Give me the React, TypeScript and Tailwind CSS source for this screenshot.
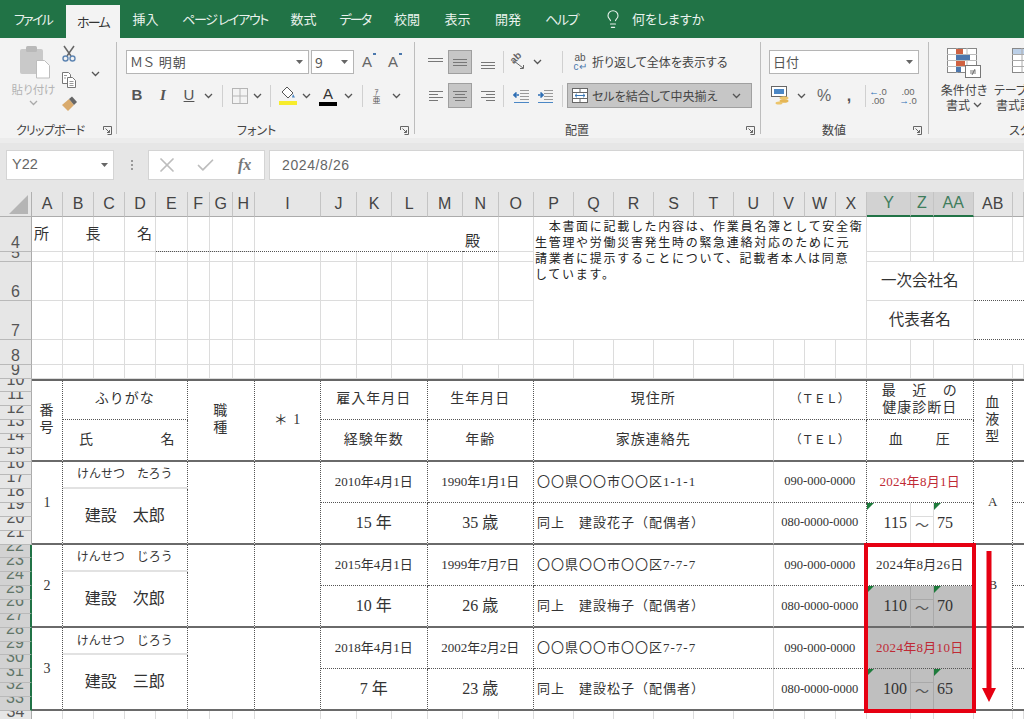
import { Check, Lightbulb, X } from "lucide-react";

const columns = ["A", "B", "C", "D", "E", "F", "G", "H", "I", "J", "K", "L", "M", "N", "O", "P", "Q", "R", "S", "T", "U", "V", "W", "X", "Y", "Z", "AA", "AB", "AC"];
const rows = [4, 5, 6, 7, 8, 9, 10, 11, 12, 13, 14, 15, 16, 17, 18, 19, 20, 21, 22, 23, 24, 25, 26, 27, 28, 29, 30, 31, 32, 33, 34];
const tabs = [
  { label: "ファイル", style: "w-[66px] tracking-[-1.7px]" },
  { label: "ホーム", style: "w-[54px] tracking-[-1.7px]", active: true },
  { label: "挿入", style: "w-[51px]" },
  { label: "ページ レイアウト", style: "w-[108px] tracking-[-1.4px]" },
  { label: "数式", style: "w-[49px]" },
  { label: "データ", style: "w-[54px] tracking-[-1.7px]" },
  { label: "校閲", style: "w-[50px]" },
  { label: "表示", style: "w-[51px]" },
  { label: "開発", style: "w-[50px]" },
  { label: "ヘルプ", style: "w-[57px] tracking-[-1.5px]" },
];

const dr = "[border-right:1px_dotted_#555]";
const db = "[border-bottom:1px_dotted_#555]";
const sb = "[border-bottom:2px_solid_#6a6a6a]";
const center = "flex items-center justify-center bg-white";

const Chev = ({ color = "#555" }: { color?: string }) => (
  <svg width="9" height="6" viewBox="0 0 9 6" fill="none" stroke={color} strokeWidth="1.3">
    <path d="M1 1l3.5 3.5L8 1" />
  </svg>
);

const Sep = () => <div className="h-[22px] w-px shrink-0 self-center bg-[#d0d0d0]" />;
const GroupSep = () => <div className="mt-[4px] h-[92px] w-px shrink-0 bg-[#bdbdbd]" />;

const Launcher = ({ className }: { className: string }) => (
  <svg className={className} width="9" height="9" viewBox="0 0 9 9" fill="none" stroke="#666" strokeWidth="1">
    <path d="M.5 4V.5H8.500V8.500H4.500" />
    <path d="M2.500 2.500l4 4M6.500 4v2.500H4" />
  </svg>
);

const TriDown = () => (
  <svg width="7" height="4" viewBox="0 0 7 4" fill="#666">
    <path d="M0 0h7L3.500 4z" />
  </svg>
);

// stroked text lines for the alignment buttons
const LinesIcon = ({ lines }: { lines: number[][] }) => (
  <svg width="16" height="16" viewBox="0 0 16 16" stroke="#777" strokeWidth="1">
    {lines.map(([x1, x2, y]) => (
      <path key={`${x1}${y}`} d={`M${x1} ${y}.5H${x2}`} />
    ))}
  </svg>
);

const PasteIcon = () => (
  <svg width="32" height="34" viewBox="0 0 32 34">
    <rect x="1" y="4" width="23" height="25" rx="2" fill="#c9c9c9" />
    <rect x="7" y="1" width="11" height="6" rx="1.500" fill="#b9b9b9" />
    <path d="M17.500 15.500h8l5 5v12.500h-13z" fill="#fff" stroke="#bdbdbd" />
  </svg>
);

const ScissorsIcon = () => (
  <svg width="16" height="17" viewBox="0 0 16 17" fill="none">
    <path d="M3 1l7 10M13 1L6 11" stroke="#666" strokeWidth="1.500" />
    <circle cx="4.500" cy="13.500" r="2.500" stroke="#5f86b3" strokeWidth="1.400" />
    <circle cx="11.500" cy="13.500" r="2.500" stroke="#5f86b3" strokeWidth="1.400" />
  </svg>
);

const CopyIcon = () => (
  <svg width="16" height="17" viewBox="0 0 16 17" fill="#fff" stroke="#777">
    <path d="M1.500 1.500h6l2 2v9h-8z" />
    <path d="M6.500 6.500h5l3 3v7h-8z" />
    <path d="M3 4.500h3M3 7h2M8.500 10.500h4M8.500 12.500h4M8.500 14.500h4" stroke="#999" />
  </svg>
);

const BrushIcon = () => (
  <svg width="17" height="15" viewBox="0 0 17 15">
    <path d="M1 9l7-6 5 6-6 6z" fill="#d9aa6c" />
    <path d="M8 3l3-2.500 5 5.500-3 3z" fill="#666" />
  </svg>
);

const BorderIcon = () => (
  <svg width="16" height="16" viewBox="0 0 16 16" fill="none" stroke="#b5b5b5">
    <rect x=".5" y=".5" width="15" height="15" />
    <path d="M8 1v14M1 8h14" />
  </svg>
);

const FillIcon = () => (
  <div className="flex w-[18px] flex-col items-center">
    <svg width="16" height="14" viewBox="0 0 16 14" fill="#fff" stroke="#555">
      <path d="M7 1l6 6-5 5-6-6z" />
      <path d="M13 8l2 3.500h-3z" fill="#4b87c5" stroke="none" />
    </svg>
    <div className="mt-[1px] h-[4px] w-[18px] bg-[#f7ec2c]" />
  </div>
);

// slanted "ab" over an arrow
const OrientIcon = () => (
  <div className="relative h-[18px] w-[20px]">
    <span className="absolute top-[-1px] left-[1px] -rotate-45 [font-family:'Liberation_Sans',sans-serif] text-[10px] leading-[12px] font-bold text-[#666]">ab</span>
    <svg className="absolute top-0 left-0" width="20" height="18" viewBox="0 0 20 18" fill="none" stroke="#666">
      <path d="M5 8l9 7M11 15.500h3.500V12" />
    </svg>
  </div>
);

const IndentIcon = ({ flip }: { flip?: boolean }) => (
  <svg width="16" height="14" viewBox="0 0 16 14" fill="none">
    <path d="M7 1.500h9M7 4.500h9M7 7.500h9M7 10.500h9" stroke="#999" />
    <path d="M1 13.500h15" stroke="#4b87c5" />
    <path d={flip ? "M1 6h4M3.500 3.500L6 6 3.500 8.500" : "M6 6H1M3.500 3.500L1 6l2.500 2.500"} stroke="#2f6fb5" strokeWidth="1.700" />
  </svg>
);

const MergeIcon = () => (
  <svg width="16" height="15" viewBox="0 0 16 15" fill="#fff" stroke="#666">
    <rect x=".5" y=".5" width="15" height="14" />
    <path d="M1 4.500h14M1 10.500h14M8 1v3M8 11v3" />
    <path d="M3 7.500h10M5 5.700L3 7.500l2 1.800M11 5.700l2 1.800-2 1.800" stroke="#3b79b7" fill="none" />
  </svg>
);

const MoneyIcon = () => (
  <svg width="20" height="19" viewBox="0 0 20 19">
    <rect x=".5" y=".5" width="15" height="10" fill="#fff" stroke="#666" />
    <rect x="3" y="3" width="10" height="5" fill="#4b87c5" />
    <ellipse cx="13" cy="12" rx="4.500" ry="1.800" fill="#ecc56c" />
    <ellipse cx="13" cy="15" rx="4.500" ry="1.800" fill="#e5b655" />
    <ellipse cx="8" cy="17" rx="3.500" ry="1.600" fill="#ecc56c" />
  </svg>
);

const CondIcon = () => (
  <svg width="34" height="30" viewBox="0 0 34 30">
    <rect x=".5" y=".5" width="29" height="24" fill="#fff" stroke="#888" />
    <path d="M10 0v25M20 0v25M0 6.500h30M0 12.500h30M0 18.500h30" stroke="#bbb" />
    <rect x="9" y="1" width="7" height="5" fill="#cf6242" />
    <rect x="9" y="7" width="14" height="5" fill="#4d77ad" />
    <rect x="9" y="13" width="9" height="5" fill="#cf6242" />
    <rect x="9" y="19" width="5" height="5" fill="#4d77ad" />
    <rect x="18.500" y="17.500" width="15" height="12" fill="#fff" stroke="#777" />
    <path d="M23 23h6M23 25h6M25 27l3-6" stroke="#555" strokeWidth=".8" />
  </svg>
);

const TableIcon = () => (
  <svg width="34" height="30" viewBox="0 0 34 30">
    <rect x=".5" y=".5" width="30" height="24" fill="#fff" stroke="#888" />
    <rect x="1" y="1" width="29" height="5" fill="#bcd0e8" />
    <path d="M10 0v25M20 0v25M0 6.500h30M0 12.500h30M0 18.500h30" stroke="#aaa" />
    <path d="M14 28l10-12 5 4-10 10z" fill="#5f8fc7" />
  </svg>
);

const Ribbon = () => (
  <div className="flex h-[100px] shrink-0 overflow-hidden bg-[#f3f3f3] text-[12px] text-[#444]">
    {/* clipboard */}
    <div className="flex w-[116px] shrink-0 flex-col">
      <div className="flex h-[75px] pt-[7px]">
        <div className="flex w-[60px] flex-col items-center pl-[7px] text-[#b3b3b3]">
          <div className="pl-[3px]"><PasteIcon /></div>
          <span className="mt-[3px] text-[11.5px] leading-[15px] whitespace-nowrap">貼り付け</span>
          <div className="mt-[3px]"><Chev color="#aaa" /></div>
        </div>
        <div className="flex h-[66px] w-[18px] flex-col items-center justify-between">
          <ScissorsIcon />
          <CopyIcon />
          <BrushIcon />
        </div>
        <div className="mt-[26px] ml-[13px]"><Chev /></div>
      </div>
      <div className="mt-[9px] flex h-[16px] items-center pl-[16px]">
        <span className="tracking-[-0.8px]">クリップボード</span>
        <Launcher className="mr-[4px] ml-auto" />
      </div>
    </div>
    <GroupSep />
    {/* font */}
    <div className="flex w-[297px] shrink-0 flex-col pt-[12px]">
      <div className="flex h-[24px] items-center">
        <div className="ml-[9px] flex h-[24px] w-[183px] items-center border border-[#b5b5b5] bg-white pr-[5px] pl-[3px] text-[13px] tracking-[1px] text-[#555]">
          ＭＳ 明朝<span className="ml-auto"><TriDown /></span>
        </div>
        <div className="ml-[2px] flex h-[24px] w-[43px] items-center border border-[#b5b5b5] bg-white pr-[5px] pl-[3px] text-[14px] text-[#555]">
          9<span className="ml-auto"><TriDown /></span>
        </div>
        <div className="relative ml-[4px] w-[18px] text-center [font-family:'Liberation_Sans',sans-serif] text-[15px] text-[#666]">
          A<div className="absolute top-[2px] right-0 h-[2px] w-[3px] bg-[#4b78ad]" />
        </div>
        <div className="relative ml-[8px] w-[18px] text-center [font-family:'Liberation_Sans',sans-serif] text-[15px] text-[#666]">
          A<div className="absolute top-[2px] right-0 h-[2px] w-[3px] bg-[#4b78ad]" />
        </div>
      </div>
      <div className="mt-[9px] flex h-[25px] items-center [font-family:'Liberation_Sans',sans-serif] text-[15px] text-[#555]">
        <div className="ml-[7px] w-[26px] text-center font-bold">B</div>
        <div className="w-[26px] text-center [font-family:'Liberation_Serif',serif] font-bold italic">I</div>
        <div className="w-[26px] text-center underline">U</div>
        <div className="flex w-[12px] justify-center"><Chev /></div>
        <div className="w-[8px]" />
        <Sep />
        <div className="flex w-[28px] justify-center pl-[6px]"><BorderIcon /></div>
        <div className="flex w-[12px] justify-center"><Chev /></div>
        <div className="w-[7px]" />
        <Sep />
        <div className="flex w-[29px] justify-center pl-[5px]"><FillIcon /></div>
        <div className="flex w-[12px] justify-center"><Chev /></div>
        <div className="flex w-[28px] flex-col items-center pl-[4px] text-[15px] leading-[15px] text-[#333]">
          A<div className="mt-[1px] h-[4px] w-[18px] bg-black" />
        </div>
        <div className="flex w-[16px] justify-center"><Chev /></div>
        <div className="w-[6px]" />
        <Sep />
        <div className="flex w-[27px] flex-col items-center [font-family:'Noto_Sans_CJK_JP',sans-serif] text-[8px] leading-[8px]">
          <span>ｱ</span>
          <span>亜</span>
        </div>
        <div className="flex w-[12px] justify-center"><Chev /></div>
      </div>
      <div className="mt-[14px] flex h-[16px] items-center pl-[120px]">
        <span>フォント</span>
        <Launcher className="mr-[5px] ml-auto" />
      </div>
    </div>
    <GroupSep />
    {/* alignment */}
    <div className="flex w-[345px] shrink-0 flex-col pt-[12px]">
      <div className="flex h-[24px] items-center">
        <div className="ml-[9px] flex w-[24px] justify-center"><LinesIcon lines={[[0, 15, 4], [0, 15, 7]]} /></div>
        <div className="flex h-[24px] w-[24px] items-center justify-center border border-[#9f9f9f] bg-[#c6c6c6]"><LinesIcon lines={[[1, 15, 5], [1, 15, 8], [1, 15, 11]]} /></div>
        <div className="flex w-[31px] justify-center"><LinesIcon lines={[[1, 15, 8], [1, 15, 11], [1, 15, 14]]} /></div>
        <Sep />
        <div className="flex w-[26px] justify-center pl-[4px]"><OrientIcon /></div>
        <div className="flex w-[14px] justify-center"><Chev /></div>
        <div className="w-[18px]" />
        <Sep />
        <div className="ml-[9px] flex w-[16px] flex-col items-center [font-family:'Liberation_Sans',sans-serif] text-[10px] leading-[9px] text-[#555]">
          <span>ab</span>
          <span className="text-[#4b78ad]">c↵</span>
        </div>
        <span className="ml-[4px] whitespace-nowrap">折り返して全体を表示する</span>
      </div>
      <div className="mt-[9px] flex h-[25px] items-center">
        <div className="ml-[9px] flex w-[24px] justify-center"><LinesIcon lines={[[1, 15, 3], [1, 10, 6], [1, 15, 9], [1, 10, 12]]} /></div>
        <div className="flex h-[25px] w-[24px] items-center justify-center border border-[#9f9f9f] bg-[#c6c6c6]"><LinesIcon lines={[[1, 15, 3], [3, 13, 6], [1, 15, 9], [3, 13, 12]]} /></div>
        <div className="flex w-[31px] justify-center"><LinesIcon lines={[[1, 15, 3], [6, 15, 6], [1, 15, 9], [6, 15, 12]]} /></div>
        <Sep />
        <div className="flex w-[30px] justify-center pl-[4px]"><IndentIcon /></div>
        <div className="flex w-[22px] justify-center"><IndentIcon flip /></div>
        <div className="w-[6px]" />
        <Sep />
        <div className="ml-[4px] flex h-[25px] w-[185px] items-center border border-[#a0a0a0] bg-[#c6c6c6] pl-[4px]">
          <MergeIcon />
          <span className="ml-[4px] whitespace-nowrap">セルを結合して中央揃え</span>
          <span className="mr-[10px] ml-auto"><Chev /></span>
        </div>
      </div>
      <div className="mt-[14px] flex h-[16px] items-center pl-[150px]">
        <span>配置</span>
        <Launcher className="mr-[5px] ml-auto" />
      </div>
    </div>
    <GroupSep />
    {/* number */}
    <div className="flex w-[167px] shrink-0 flex-col pt-[12px]">
      <div className="ml-[8px] flex h-[24px] w-[150px] items-center border border-[#b5b5b5] bg-white pr-[5px] pl-[3px] text-[13px] text-[#555]">
        日付<span className="ml-auto"><TriDown /></span>
      </div>
      <div className="mt-[9px] flex h-[25px] items-center">
        <div className="ml-[10px] w-[20px]"><MoneyIcon /></div>
        <div className="flex w-[20px] justify-center"><Chev /></div>
        <div className="w-[26px] text-center [font-family:'Liberation_Sans',sans-serif] text-[16px] text-[#666]">%</div>
        <div className="w-[24px] text-center [font-family:'Liberation_Sans',sans-serif] text-[16px] font-bold text-[#555]">,</div>
        <div className="w-[4px]" />
        <Sep />
        <div className="flex w-[24px] flex-col items-center [font-family:'Liberation_Sans',sans-serif] text-[9.5px] leading-[9px] text-[#666]">
          <span><span className="text-[#2f6fb5]">←</span>.0</span>
          <span>.00</span>
        </div>
        <div className="flex w-[36px] flex-col items-center [font-family:'Liberation_Sans',sans-serif] text-[9.5px] leading-[9px] text-[#666]">
          <span>.00</span>
          <span><span className="text-[#2f6fb5]">→</span>.0</span>
        </div>
      </div>
      <div className="mt-[14px] flex h-[16px] items-center pl-[61px]">
        <span>数値</span>
        <Launcher className="mr-[6px] ml-auto" />
      </div>
    </div>
    <GroupSep />
    {/* styles */}
    <div className="flex w-[120px] shrink-0 flex-col pt-[10px]">
      <div className="flex h-[74px] pl-[5px]">
        <div className="flex w-[60px] shrink-0 flex-col items-center">
          <CondIcon />
          <span className="mt-[4px] leading-[15px] whitespace-nowrap">条件付き</span>
          <span className="flex items-center gap-[3px] leading-[15px]">書式<Chev /></span>
        </div>
        <div className="flex w-[60px] shrink-0 flex-col">
          <div className="ml-[18px]"><TableIcon /></div>
          <span className="mt-[4px] leading-[15px] whitespace-nowrap">テーブルとして</span>
          <span className="ml-[2px] leading-[15px] whitespace-nowrap">書式設定</span>
        </div>
      </div>
      <div className="mt-[4px] flex h-[16px] items-center pl-[80px]">
        <span className="whitespace-nowrap">スタイル</span>
      </div>
    </div>
  </div>
);

const FormulaBar = () => (
  <div className="flex h-[54px] shrink-0 items-start border-t-[5px] border-t-[#ececec] bg-[#e6e6e6] pt-[7px] text-[#666]">
    <div className="ml-[6px] flex h-[30px] w-[108px] items-center border border-[#d4d4d4] bg-white pr-[5px] pl-[5px] [font-family:'Liberation_Sans',sans-serif] text-[14.5px]">
      Y22<span className="ml-auto"><TriDown /></span>
    </div>
    <div className="ml-[15px] flex h-[30px] w-[5px] flex-col items-center justify-center gap-[2px]">
      <div className="h-[2px] w-[2px] bg-[#999]" />
      <div className="h-[2px] w-[2px] bg-[#999]" />
      <div className="h-[2px] w-[2px] bg-[#999]" />
    </div>
    <div className="ml-[14px] flex h-[30px] w-[117px] items-center border border-[#d4d4d4] bg-white">
      <X className="ml-[6px]" size={24} color="#bdbdbd" strokeWidth={1.7} />
      <Check className="ml-[16px]" size={21} color="#bdbdbd" strokeWidth={2} />
      <span className="ml-[22px] [font-family:'Liberation_Serif',serif] text-[16px] font-bold text-[#777] italic">fx</span>
    </div>
    <div className="ml-[4px] flex h-[30px] grow items-center border border-[#d4d4d4] bg-white pl-[12px] [font-family:'Liberation_Sans',sans-serif] text-[14px] tracking-[0.6px]">
      2024/8/26
    </div>
  </div>
);

const TableHead = () => (
  <div className="col-[2/31] row-[8/14] grid grid-cols-subgrid grid-rows-subgrid text-[14px] tracking-[1px] text-[#333]">
    <div className={`col-[1] row-[1/7] flex-col leading-[17px] ${center} ${dr} ${sb}`}>
      <span>番</span>
      <span>号</span>
    </div>
    <div className={`col-[2/6] row-[1/4] ${center} ${dr} ${db}`}>ふりがな</div>
    <div className={`col-[2/6] row-[4/7] justify-between! pr-[11px] pl-[16px] ${center} ${dr} ${sb}`}>
      <span>氏</span>
      <span>名</span>
    </div>
    <div className={`col-[6/9] row-[1/7] flex-col leading-[17px] ${center} ${dr} ${sb}`}>
      <span>職</span>
      <span>種</span>
    </div>
    <div className={`col-[9] row-[1/7] ${center} ${dr} ${sb}`}>＊ 1</div>
    <div className={`col-[10/13] row-[1/4] ${center} ${dr} ${db}`}>雇入年月日</div>
    <div className={`col-[10/13] row-[4/7] ${center} ${dr} ${sb}`}>経験年数</div>
    <div className={`col-[13/16] row-[1/4] ${center} ${dr} ${db}`}>生年月日</div>
    <div className={`col-[13/16] row-[4/7] ${center} ${dr} ${sb}`}>年齢</div>
    <div className={`col-[16/22] row-[1/4] ${center} [border-right:1px_solid_#d4d4d4] ${db}`}>現住所</div>
    <div className={`col-[16/22] row-[4/7] ${center} [border-right:1px_solid_#d4d4d4] ${sb}`}>家族連絡先</div>
    <div className={`col-[22/25] row-[1/4] text-[12px] tracking-[0px] ${center} ${dr} ${db}`}>（ＴＥＬ）</div>
    <div className={`col-[22/25] row-[4/7] text-[12px] tracking-[0px] ${center} ${dr} ${sb}`}>（ＴＥＬ）</div>
    <div className={`col-[25/28] row-[1/4] flex-col leading-[17px] ${center} ${dr} ${db}`}>
      <div className="flex w-[76px] justify-between"><span>最</span><span>近</span><span>の</span></div>
      <span>健康診断日</span>
    </div>
    <div className={`col-[25/28] row-[4/7] ${center} ${dr} ${sb}`}>
      <div className="flex w-[62px] justify-between"><span>血</span><span>圧</span></div>
    </div>
    <div className={`col-[28] row-[1/7] flex-col leading-[17px] ${center} ${dr} ${sb}`}>
      <span>血</span>
      <span>液</span>
      <span>型</span>
    </div>
    <div className={`col-[29] row-[1/7] ${center} ${sb}`} />
    <div className="col-[1/30] row-[1] h-[2px] self-start bg-[#666]" />
  </div>
);

type RecordProps = {
  className: string;
  no: string;
  kana: string;
  name: string;
  hired: string;
  years: string;
  birth: string;
  age: string;
  address: string;
  family: string;
  checkup: string;
  checkupRed?: boolean;
  high: string;
  low: string;
  blood?: string;
  topGray?: boolean;
  bottomGray?: boolean;
};

const Flag = () => <div className="absolute top-0 left-0 h-0 w-0 border-t-[7px] border-r-[7px] border-t-[#1e7b3c] border-r-transparent" />;

const StaffRecord = (p: RecordProps) => {
  const fillTop = p.topGray ? "bg-[#bfbfbf]!" : "";
  const fillBottom = p.bottomGray ? "bg-[#bfbfbf]!" : "";
  const lightEdge = p.bottomGray ? "[border-right:1px_solid_#a9a9a9]" : "[border-right:1px_solid_#dcdcdc]";
  const lightLine = p.bottomGray ? "[border-bottom:1px_solid_#a9a9a9]" : "[border-bottom:1px_solid_#dcdcdc]";
  return (
    <div className={`${p.className} grid grid-cols-subgrid grid-rows-subgrid text-[#333]`}>
      <div className={`col-[1] row-[1/7] text-[14px] ${center} ${dr} ${sb}`}>{p.no}</div>
      <div className={`col-[2/6] row-[1/3] text-[12px] ${center} ${dr} [border-bottom:2px_solid_#e2e2e2]`}>{p.kana}</div>
      <div className={`col-[2/6] row-[3/7] text-[16px] ${center} ${dr} ${sb}`}>{p.name}</div>
      <div className={`col-[6/9] row-[1/7] ${center} ${dr} ${sb}`} />
      <div className={`col-[9] row-[1/7] ${center} ${dr} ${sb}`} />
      <div className={`col-[10/13] row-[1/4] text-[13px] ${center} ${dr} ${db}`}>{p.hired}</div>
      <div className={`col-[10/13] row-[4/7] text-[16px] ${center} ${dr} ${sb}`}>{p.years}</div>
      <div className={`col-[13/16] row-[1/4] text-[13px] ${center} ${dr} ${db}`}>{p.birth}</div>
      <div className={`col-[13/16] row-[4/7] text-[16px] ${center} ${dr} ${sb}`}>{p.age}</div>
      <div className={`col-[16/22] row-[1/4] justify-start! pl-[3px] text-[13px] tracking-[1px] ${center} [border-right:1px_solid_#d4d4d4] ${db}`}>{p.address}</div>
      <div className={`col-[16/22] row-[4/7] justify-start! pl-[3px] text-[13px] tracking-[1px] ${center} [border-right:1px_solid_#d4d4d4] ${sb}`}>{p.family}</div>
      <div className={`col-[22/25] row-[1/4] text-[12.5px] ${center} ${dr} ${db}`}>090-000-0000</div>
      <div className={`col-[22/25] row-[4/7] text-[12.5px] ${center} ${dr} ${sb}`}>080-0000-0000</div>
      <div className={`col-[25/28] row-[1/4] text-[13px] tracking-[0.3px] ${center} ${dr} ${db} ${fillTop} ${p.checkupRed ? "text-[#bf2a35]" : ""}`}>{p.checkup}</div>
      <div className={`relative col-[25] row-[4/7] justify-end! pr-[3px] text-[16px] ${center} ${lightEdge} ${sb} ${fillBottom}`}>
        <Flag />
        {p.high}
      </div>
      <div className={`col-[26] row-[4] ${center} ${lightEdge} ${lightLine} ${fillBottom}`} />
      <div className={`col-[26] row-[5/7] pb-[8px] text-[14px] text-[#555] ${center} ${lightEdge} ${sb} ${fillBottom}`}>～</div>
      <div className={`relative col-[27] row-[4/7] justify-start! pl-[3px] text-[16px] ${center} ${dr} ${sb} ${fillBottom}`}>
        <Flag />
        {p.low}
      </div>
      <div className={`col-[28] row-[1/7] text-[13px] ${center} ${dr} ${sb}`}>{p.blood}</div>
      <div className={`col-[29] row-[1/4] ${center} ${db}`} />
      <div className={`col-[29] row-[4/7] ${center} ${sb}`} />
    </div>
  );
};

const Sheet = () => (
  <div className="relative grid h-[527px] grid-cols-[32px_31px_31px_31px_31px_31.5px_22.5px_22.5px_22.5px_66px_36px_35px_35.5px_35.5px_35.5px_35.5px_40px_40px_40px_40px_40px_39.5px_31px_31px_31.5px_44px_23px_39.5px_39.5px_11px] grid-rows-[25px_35px_10px_39px_39px_25px_13.5px_repeat(25,13.85px)] overflow-hidden bg-white [font-family:'Liberation_Serif','Noto_Sans_CJK_JP',serif] [font-feature-settings:normal]">
    {/* headers */}
    <div className="col-[1] row-[1] flex items-end justify-end border-r border-b border-[#b0b0b0] bg-[#e6e6e6] pr-[3px] pb-[2px]">
      <svg width="19" height="19" viewBox="0 0 19 19" fill="#b5b5b5">
        <path d="M19 0v19H0z" />
      </svg>
    </div>
    {columns.map((c, i) => {
      const picked = c === "Y" || c === "Z" || c === "AA";
      return (
        <div
          key={c}
          style={{ gridColumn: i + 2, gridRow: 1 }}
          className={`flex items-center justify-center overflow-hidden border-r border-[#c4c4c4] pb-[1px] [font-family:'Liberation_Sans',sans-serif] text-[16px] ${picked ? "border-b-2 border-b-[#217346] bg-[#d2d2d2] text-[#3f7d5c]" : "border-b border-b-[#ababab] bg-[#e6e6e6] text-[#444]"}`}
        >
          {c === "AC" ? "" : c}
        </div>
      );
    })}
    {rows.map((r, i) => {
      const picked = r >= 22 && r <= 33;
      return (
        <div
          key={r}
          style={{ gridColumn: 1, gridRow: i + 2 }}
          className={`flex items-end justify-center overflow-hidden border-b border-b-[#b9b9b9] [font-family:'Liberation_Sans',sans-serif] text-[16px] leading-none ${r >= 10 ? "pb-[3.5px]" : ""} ${picked ? "bg-[#d2d2d2] text-[#5f7568] [border-right:2px_solid_#217346]" : "bg-[#e6e6e6] text-[#555] [border-right:1px_solid_#ababab]"}`}
        >
          {r}
        </div>
      );
    })}
    {/* gridlines */}
    {rows.map((r, i) =>
      columns.map((c, j) => (
        <div key={`${c}${r}`} style={{ gridColumn: j + 2, gridRow: i + 2 }} className="border-r border-b border-[#dcdcdc]" />
      )),
    )}
    {/* upper block */}
    <div className="col-[2/6] row-[2] flex items-center justify-between pr-[4px] pl-[2px] text-[15px] text-[#333]">
      <span>所</span>
      <span>長</span>
      <span>名</span>
    </div>
    <div className="col-[10/15] row-[2] bg-white" />
    <div className="col-[6/16] row-[2] self-end [border-bottom:1px_dotted_#555]" />
    <div className="col-[15] row-[2] flex items-end bg-white pb-[1px] pl-[2px] text-[15px] leading-[18px] text-[#333] [border-right:1px_solid_#dcdcdc] [border-bottom:1px_dotted_#555]">殿</div>
    <div className="col-[17/26] row-[2/6] border-r border-b border-[#dcdcdc] bg-white pt-[2px] pl-[1px] text-[12px] leading-[16px] tracking-[1.7px] whitespace-nowrap text-[#222]">
      <div>　本書面に記載した内容は、作業員名簿として安全衛</div>
      <div>生管理や労働災害発生時の緊急連絡対応のために元</div>
      <div>請業者に提示することについて、記載者本人は同意</div>
      <div>しています。</div>
    </div>
    <div className={`col-[26/29] row-[4] border-r border-b border-[#dcdcdc] text-[15.5px] text-[#333] ${center}`}>一次会社名</div>
    <div className={`col-[26/29] row-[5] border-r border-b border-[#dcdcdc] text-[15.5px] text-[#333] ${center}`}>代表者名</div>
    <div className={`col-[29/31] row-[4] bg-white ${db}`} />
    <div className={`col-[29/31] row-[5] bg-white ${db}`} />
    <div className="col-[14/17] row-[6] border-r border-b border-[#dcdcdc] bg-white" />
    <div className="col-[29/31] row-[6] border-b border-[#dcdcdc] bg-white" />
    {/* roster */}
    <TableHead />
    <StaffRecord
      className="col-[2/31] row-[14/20]"
      no="1"
      kana="けんせつ　たろう"
      name="建設　太郎"
      hired="2010年4月1日"
      years="15 年"
      birth="1990年1月1日"
      age="35 歳"
      address="〇〇県〇〇市〇〇区1-1-1"
      family="同上　建設花子（配偶者）"
      checkup="2024年8月1日"
      checkupRed
      high="115"
      low="75"
      blood="A"
    />
    <StaffRecord
      className="col-[2/31] row-[20/26]"
      no="2"
      kana="けんせつ　じろう"
      name="建設　次郎"
      hired="2015年4月1日"
      years="10 年"
      birth="1999年7月7日"
      age="26 歳"
      address="〇〇県〇〇市〇〇区7-7-7"
      family="同上　建設梅子（配偶者）"
      checkup="2024年8月26日"
      high="110"
      low="70"
      blood="B"
      bottomGray
    />
    <StaffRecord
      className="col-[2/31] row-[26/32]"
      no="3"
      kana="けんせつ　じろう"
      name="建設　三郎"
      hired="2018年4月1日"
      years="7 年"
      birth="2002年2月2日"
      age="23 歳"
      address="〇〇県〇〇市〇〇区7-7-7"
      family="同上　建設松子（配偶者）"
      checkup="2024年8月10日"
      checkupRed
      high="100"
      low="65"
      topGray
      bottomGray
    />
    {/* red callout drawn over the sheet */}
    <div className="absolute top-[351px] left-[864px] h-[170px] w-[112px] border-[4px] border-[#e60012]" />
    <svg className="absolute top-[359px] left-[982px]" width="14" height="152" viewBox="0 0 14 152" fill="#e60012">
      <path d="M4.500 0h5v137h4.500L7 151 0 137h4.500z" />
    </svg>
  </div>
);

export default function App() {
  return (
    <div className="flex h-[719px] w-[1024px] flex-col overflow-hidden [font-family:'Noto_Sans_CJK_JP','Liberation_Sans',sans-serif] [font-feature-settings:'palt']">
      <div className="flex h-[38px] shrink-0 bg-[#217346] text-[13px] text-[#e9f2ed]">
        {tabs.map((t) => (
          <div
            key={t.label}
            className={`flex items-center justify-center whitespace-nowrap ${t.style} ${t.active ? "mt-[5px] bg-[#f3f3f3] text-[#333]" : ""}`}
          >
            {t.label}
          </div>
        ))}
        <div className="ml-[13px] flex items-center">
          <Lightbulb size={20} strokeWidth={1.3} color="#e9f2ed" />
          <span className="ml-[9px]">何をしますか</span>
        </div>
      </div>
      <Ribbon />
      <FormulaBar />
      <Sheet />
    </div>
  );
}
